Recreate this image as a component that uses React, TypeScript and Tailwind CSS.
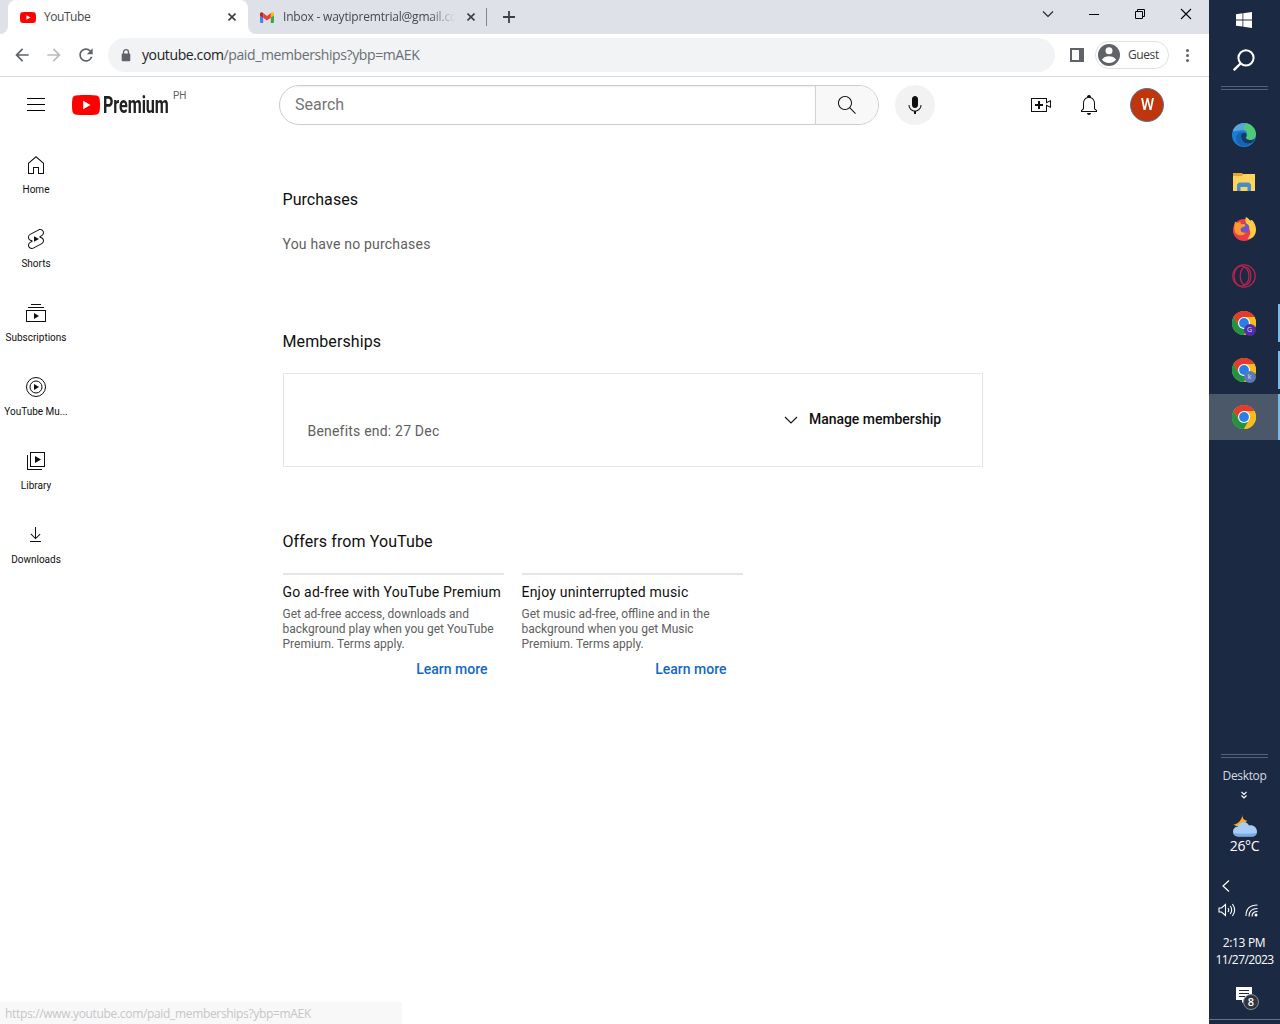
import React from "react";

const segoe = "font-['Open_Sans','Noto_Sans',sans-serif]";

function Icon({ d, className = "size-6" }: { d: string; className?: string }) {
  return (
    <svg viewBox="0 0 24 24" className={className} fill="currentColor">
      <path d={d} />
    </svg>
  );
}

const icons = {
  home: "m12 4.44 7 6.09V20h-4v-6H9v6H5v-9.47l7-6.09m0-1.32-8 6.96V21h6v-6h4v6h6V10.08l-8-6.96z",
  shorts:
    "M10 14.65v-5.3L15 12l-5 2.65zm7.77-4.33-1.2-.5L18 9.06c1.84-.96 2.53-3.23 1.56-5.06s-3.24-2.53-5.07-1.56L6 6.94c-1.29.68-2.07 2.04-2 3.49.07 1.42.93 2.67 2.22 3.25.03.01 1.2.5 1.2.5L6 14.93c-1.83.97-2.53 3.24-1.56 5.07.97 1.83 3.24 2.53 5.07 1.56l8.5-4.5c1.29-.68 2.06-2.04 1.99-3.49-.07-1.42-.94-2.68-2.23-3.25zm-.23 5.86-8.5 4.5c-1.34.71-3.01.2-3.72-1.14-.71-1.34-.2-3.01 1.14-3.72l2.04-1.08v-1.21l-.69-.28-1.11-.46c-.99-.41-1.65-1.35-1.7-2.41-.05-1.06.52-2.06 1.46-2.56l8.5-4.5c1.34-.71 3.01-.2 3.72 1.14.71 1.34.2 3.01-1.14 3.72L15.5 9.26v1.21l1.8.74c.99.41 1.65 1.35 1.7 2.41.05 1.06-.52 2.06-1.46 2.56z",
  subs: "M10 18v-6l5 3-5 3zm7-15H7v1h10V3zm3 3H4v1h16V6zm2 3H2v12h20V9zM3 10h18v10H3V10z",
  library: "m11 7 6 3.5L11 14V7zm7 13H4V6H3v15h15v-1zm3-2H6V3h15v15zM7 17h13V4H7v13z",
  download: "M17 18v1H6v-1h11zm-.5-6.6-.7-.7-3.8 3.7V4h-1v10.4l-3.8-3.8-.7.7 5 5 5-4.9z",
  search:
    "m20.87 20.17-5.59-5.59C16.35 13.35 17 11.75 17 10c0-3.87-3.13-7-7-7s-7 3.13-7 7 3.13 7 7 7c1.75 0 3.35-.65 4.58-1.71l5.59 5.59.7-.71zM10 16c-3.31 0-6-2.69-6-6s2.69-6 6-6 6 2.69 6 6-2.69 6-6 6z",
  mic: "M12 3c-1.66 0-3 1.37-3 3.07v5.86c0 1.7 1.34 3.07 3 3.07s3-1.37 3-3.07V6.07C15 4.37 13.66 3 12 3zm6.5 9h-1c0 3.03-2.47 5.5-5.5 5.5S6.5 15.03 6.5 12h-1c0 3.24 2.39 5.93 5.5 6.41V21h2v-2.59c3.11-.48 5.5-3.17 5.5-6.41z",
  create:
    "M14 13h-3v3H9v-3H6v-2h3V8h2v3h3v2zm3-7H3v12h14v-6.39l4 1.83V8.56l-4 1.83V6m1-1v3.83L22 7v8l-4-1.83V19H2V5h16z",
  bell: "M10 20h4c0 1.1-.9 2-2 2s-2-.9-2-2zm10-2.65V19H4v-1.65l2-1.88v-5.15C6 7.4 7.56 5.1 10 4.34v-.38c0-1.42 1.49-2.5 2.99-1.76.65.32 1.01 1.03 1.01 1.76v.39c2.44.75 4 3.06 4 5.98v5.15l2 1.87zm-1 .42-2-1.88v-5.47c0-2.47-1.19-4.36-3.13-5.1-1.26-.53-2.64-.5-3.84.03C8.15 6.11 7 7.99 7 10.42v5.47l-2 1.88V18h14v-.23z",
  back: "M20 11H7.83l5.59-5.59L12 4l-8 8 8 8 1.41-1.41L7.83 13H20v-2z",
  forward: "m12 4-1.41 1.41L16.17 11H4v2h12.17l-5.58 5.59L12 20l8-8z",
  reload:
    "M17.65 6.35A7.958 7.958 0 0 0 12 4c-4.42 0-7.99 3.58-7.99 8s3.57 8 7.99 8c3.73 0 6.84-2.55 7.73-6h-2.08A5.99 5.99 0 0 1 12 18c-3.31 0-6-2.69-6-6s2.69-6 6-6c1.66 0 3.14.69 4.22 1.78L13 11h7V4l-2.35 2.35z",
};

function PlayBadge({ className }: { className: string }) {
  return (
    <svg viewBox="0 0 28 20" className={className} preserveAspectRatio="none">
      <path
        fill="#f00"
        d="M27.4 3.1A3.6 3.6 0 0 0 24.9.6C22.7 0 14 0 14 0S5.3 0 3.1.6A3.6 3.6 0 0 0 .6 3.1C0 5.3 0 10 0 10s0 4.7.6 6.9a3.6 3.6 0 0 0 2.500 2.500C5.3 20 14 20 14 20s8.7 0 10.9-.6a3.6 3.6 0 0 0 2.500-2.500C28 14.7 28 10 28 10s0-4.7-.6-6.9z"
      />
      <path fill="#fff" d="m11.2 14.3 7.3-4.3-7.3-4.3z" />
    </svg>
  );
}

function Close() {
  return (
    <svg viewBox="0 0 8 8" className="size-2 shrink-0" stroke="#3c4043" strokeWidth="1.6">
      <path d="M.5.5l7 7M7.5.5l-7 7" />
    </svg>
  );
}

function TabStrip() {
  return (
    <div className={`flex h-[34px] bg-[#dee1e8] pl-2 text-[12px] text-[#45494d] ${segoe}`}>
      <div className="relative flex w-60 items-center rounded-t-lg bg-white pl-3">
        <svg viewBox="0 0 8 8" className="absolute -left-2 bottom-0 size-2">
          <path fill="#fff" d="M8 0v8H0a8 8 0 0 0 8-8z" />
        </svg>
        <svg viewBox="0 0 8 8" className="absolute -right-2 bottom-0 size-2">
          <path fill="#fff" d="M0 0v8h8a8 8 0 0 1-8-8z" />
        </svg>
        <PlayBadge className="h-[11px] w-4" />
        <span className="ml-2 flex-1 tracking-[-0.45px]">YouTube</span>
        <span className="mr-3">
          <Close />
        </span>
      </div>
      <div className="flex w-[238px] items-center pl-3">
        <svg viewBox="0 0 14 11" className="h-[11px] w-[14px] shrink-0">
          <path fill="#4285f4" d="M0 2v8a1 1 0 0 0 1 1h2.200V4z" />
          <path fill="#34a853" d="M14 2v8a1 1 0 0 1-1 1h-2.200V4z" />
          <path fill="#fbbc04" d="M10.800 1v4.800L14 3.500V1.800C14 .3 12.200-.5 10.800 1z" />
          <path fill="#c5221f" d="M3.200 1v4.800L0 3.500V1.800C0 .3 1.800-.5 3.200 1z" />
          <path fill="#ea4335" d="M3.200 5.800V1L7 3.900 10.800 1v4.800L7 8.600z" />
        </svg>
        <span className="ml-[9px] w-[172px] shrink-0 whitespace-nowrap tracking-[-0.2px] [mask-image:linear-gradient(to_right,black_85%,transparent)]">
          Inbox - waytipremtrial@gmail.cc
        </span>
        <span className="ml-3">
          <Close />
        </span>
      </div>
      <div className="mt-2 h-[18px] w-px bg-[#80868b]" />
      <svg viewBox="0 0 12 12" className="ml-4 mt-[11px] size-3" stroke="#3c4043" strokeWidth="1.8">
        <path d="M6 0v12M0 6h12" />
      </svg>
      <div className="ml-auto mr-[17px] flex h-7 items-center text-black">
        <svg viewBox="0 0 12 12" className="mr-[34px] size-3" fill="none" stroke="#222" strokeWidth="1.1">
          <path d="m1 3.500 5 5 5-5" />
        </svg>
        <svg viewBox="0 0 12 12" className="mr-[34px] size-3" fill="none" stroke="#000">
          <path d="M1 6.500h10" />
        </svg>
        <svg viewBox="0 0 12 12" className="mr-[34px] size-3" fill="none" stroke="#000">
          <path d="M1.500 3.500h7v7h-7zM3.500 3.500v-2h7v7h-2" />
        </svg>
        <svg viewBox="0 0 12 12" className="size-3" fill="none" stroke="#000" strokeWidth="1.1">
          <path d="m1 1 10 10M11 1 1 11" />
        </svg>
      </div>
    </div>
  );
}

function Toolbar() {
  return (
    <div className={`flex h-[43px] items-center border-b border-[#dadce0] bg-white pl-3 ${segoe}`}>
      <Icon d={icons.back} className="size-5 text-[#5f6368]" />
      <Icon d={icons.forward} className="ml-3 size-5 text-[#babcbe]" />
      <Icon d={icons.reload} className="ml-3 size-5 text-[#5f6368]" />
      <div className="ml-3 flex h-[34px] w-[947px] items-center rounded-full bg-[#f1f3f4] pl-[13px]">
        <svg viewBox="0 0 10 13" className="h-[13px] w-[10px]">
          <path d="M2.500 5V3.200a2.500 2.500 0 0 1 5 0V5" fill="none" stroke="#5f6368" strokeWidth="1.300" />
          <rect x=".7" y="4.500" width="8.600" height="7.800" rx="1" fill="#5f6368" />
        </svg>
        <span className="ml-[11px] mt-[-1px] text-[14px] tracking-[-0.39px] text-[#6a6e73]">
          <span className="text-[#202124]">youtube.com</span>/paid_memberships?ybp=mAEK
        </span>
      </div>
      <div className="ml-[15px] h-[14px] w-[14px] border-2 border-r-[5px] border-[#5f6368]" />
      <div className="ml-[11px] flex h-7 w-[74px] items-center rounded-full border border-[#dfe1e5] pl-[2px]">
        <svg viewBox="0 0 22 22" className="size-[22px]">
          <circle cx="11" cy="11" r="11" fill="#5f6368" />
          <circle cx="11" cy="6.800" r="3.500" fill="#fff" />
          <path d="M4 15.500c2.500-4.500 11.500-4.500 14 0-2.500 4.500-11.500 4.500-14 0z" fill="#fff" />
        </svg>
        <span className="ml-2 text-[12px] tracking-[-0.4px] text-[#3c4043]">Guest</span>
      </div>
      <div className="ml-[17px] flex flex-col gap-[2px]">
        <i className="size-[3px] rounded-full bg-[#5f6368]" />
        <i className="size-[3px] rounded-full bg-[#5f6368]" />
        <i className="size-[3px] rounded-full bg-[#5f6368]" />
      </div>
    </div>
  );
}

function Masthead() {
  return (
    <header className="flex h-14 items-center pl-6 text-[#0f0f0f]">
      <div className="ml-[3px] mt-[-1px] flex w-[18px] flex-col gap-[5px]">
        <i className="h-px bg-[#030303]" />
        <i className="h-px bg-[#030303]" />
        <i className="h-px bg-[#030303]" />
      </div>
      <div className="ml-[27px] flex w-[207px] items-center">
        <PlayBadge className="h-5 w-7" />
        <span className="ml-[3px] mt-px w-[67px] origin-left scale-x-[.735] scale-y-105 text-[22px] font-bold leading-5 tracking-[-0.1px] text-[#212121]">
          Premium
        </span>
        <span className="mb-[18px] ml-[3px] text-[10px] leading-3 text-[#606060]">PH</span>
      </div>
      <div className="flex h-10 w-[600px] overflow-hidden rounded-full border border-[#ccc]">
        <div className="flex flex-1 items-center pl-[15px] text-[16px] text-[#757575] shadow-[inset_0_1px_2px_#eee]">
          Search
        </div>
        <div className="flex w-[63px] items-center justify-center border-l border-[#d3d3d3] bg-[#f8f8f8]">
          <Icon d={icons.search} />
        </div>
      </div>
      <div className="ml-4 flex size-10 items-center justify-center rounded-full bg-[#f2f2f2]">
        <Icon d={icons.mic} />
      </div>
      <Icon d={icons.create} className="ml-[94px] size-6" />
      <Icon d={icons.bell} className="ml-6 size-6" />
      <div className="ml-[29px] flex size-[34px] items-center justify-center rounded-full border border-[#58739a] bg-[#bf360c] text-[17px] font-medium text-white">
        <span className="scale-x-90">W</span>
      </div>
    </header>
  );
}

function NavItem({ label, children }: { label: string; children: React.ReactNode }) {
  return (
    <div className="flex h-[74px] flex-col items-center pt-4 text-[#0f0f0f]">
      {children}
      <span className="mt-[6px] text-[10px] leading-[14px]">{label}</span>
    </div>
  );
}

function Sidebar() {
  return (
    <nav className="w-[72px] shrink-0 pt-1">
      <NavItem label="Home"><Icon d={icons.home} /></NavItem>
      <NavItem label="Shorts"><Icon d={icons.shorts} /></NavItem>
      <NavItem label="Subscriptions"><Icon d={icons.subs} /></NavItem>
      <NavItem label="YouTube Mu...">
        <svg viewBox="0 0 24 24" className="size-6" fill="none" stroke="currentColor">
          <circle cx="12" cy="12" r="9.500" />
          <circle cx="12" cy="12" r="6" />
          <path d="M10 9v6l5-3z" fill="currentColor" stroke="none" />
        </svg>
      </NavItem>
      <NavItem label="Library"><Icon d={icons.library} /></NavItem>
      <NavItem label="Downloads"><Icon d={icons.download} /></NavItem>
    </nav>
  );
}

function Offer({ title, lines }: { title: string; lines: string[] }) {
  return (
    <div className="w-[221px] border-t-2 border-[#e5e5e5] pt-[7px]">
      <h3 className="ml-[-0.5px] whitespace-nowrap text-[14px] leading-5 tracking-[0.2px] text-[#0f0f0f]">{title}</h3>
      <div className="ml-[-0.5px] mt-[5px] whitespace-nowrap text-[12px] leading-[15px] text-[#606060]">
        {lines.map((l) => (
          <p key={l}>{l}</p>
        ))}
      </div>
      <div className="mr-[16.5px] mt-[7px] text-right text-[14px] font-medium leading-5 text-[#1367c4]">Learn more</div>
    </div>
  );
}

function Content() {
  return (
    <main className="ml-[211px] w-[700px] text-[#0f0f0f]">
      <h2 className="ml-[-0.5px] mt-[55px] text-[16px] leading-6 tracking-[0.05px]">Purchases</h2>
      <p className="ml-[-0.5px] mt-[22px] text-[14px] leading-5 tracking-[0.2px] text-[#606060]">You have no purchases</p>
      <h2 className="ml-[-0.5px] mt-[76px] text-[16px] leading-6 tracking-[0.1px]">Memberships</h2>
      <div className="mt-[19px] flex h-[94px] justify-between border border-[#e5e5e5] pl-[23.5px] pr-[41px]">
        <p className="mt-[47px] text-[14px] leading-5 tracking-[0.2px] text-[#606060]">Benefits end: 27 Dec</p>
        <div className="mt-[35px] flex h-5 items-center text-[14px] font-medium tracking-[-0.04px]">
          <svg viewBox="0 0 14 8" className="mr-[11px] mt-[2px] h-2 w-[14px]" fill="none" stroke="currentColor" strokeWidth="1.1">
            <path d="m1 1 6 6 6-6" />
          </svg>
          Manage membership
        </div>
      </div>
      <h2 className="ml-[-0.5px] mt-[63px] text-[16px] leading-6 tracking-[0.1px]">Offers from YouTube</h2>
      <div className="mt-[19px] flex gap-[18px]">
        <Offer
          title="Go ad-free with YouTube Premium"
          lines={["Get ad-free access, downloads and", "background play when you get YouTube", "Premium. Terms apply."]}
        />
        <Offer
          title="Enjoy uninterrupted music"
          lines={["Get music ad-free, offline and in the", "background when you get Music", "Premium. Terms apply."]}
        />
      </div>
    </main>
  );
}

function Chrome({ badge, badgeClass = "" }: { badge?: string; badgeClass?: string }) {
  return (
    <div className="relative size-6">
      <svg viewBox="0 0 24 24" className="size-6">
        <circle cx="12" cy="12" r="12" fill="#fbbc1e" />
        <path d="M1.600 6A12 12 0 0 1 22.400 6H12L6.800 15z" fill="#e33b2e" />
        <path d="M1.600 6A12 12 0 0 0 12 24l5.200-9L12 17.500 6.800 15z" fill="#229342" />
        <path d="M12 24l5.200-9 .5-9h4.700A12 12 0 0 1 12 24z" fill="#fbbc1e" />
        <circle cx="12" cy="12" r="6" fill="#fff" />
        <circle cx="12" cy="12" r="4.900" fill="#2b7de9" />
      </svg>
      {badge && (
        <span
          className={`absolute -bottom-px left-3 flex size-3 items-center justify-center rounded-full text-[7px] leading-none text-[#dcdcf5] ${badgeClass}`}
        >
          {badge}
        </span>
      )}
    </div>
  );
}

function TaskItem({ open, active, children }: { open?: boolean; active?: boolean; children: React.ReactNode }) {
  return (
    <div className={`flex w-full items-center ${active ? "mt-px h-[46px] bg-[#4b586a]" : "h-[47px]"}`}>
      <div className="flex w-[69px] justify-center">{children}</div>
      {open && <i className={`w-[2px] bg-[#76b9ed] ${active ? "h-[46px]" : "h-[38px]"}`} />}
    </div>
  );
}

function Taskbar() {
  return (
    <aside className={`flex h-full w-[71px] shrink-0 flex-col items-center bg-[#1c2942] text-[12px] text-white ${segoe}`}>
      <svg viewBox="0 0 16 16" className="mr-px mt-3 size-4 shrink-0" fill="#fff">
        <path d="M0 2.200 6.500 1.300v6.200H0zM7.300 1.200 16 0v7.500H7.300zM0 8.400h6.500v6.200L0 13.700zM7.300 8.400H16V16l-8.700-1.200z" />
      </svg>
      <svg viewBox="0 0 22 22" className="mr-[2px] mt-[21px] size-[22px] shrink-0" fill="none" stroke="#fff" strokeWidth="2">
        <circle cx="13" cy="8.800" r="7.600" />
        <path d="M7.500 14.500.8 21.200" strokeWidth="2.400" />
      </svg>
      <div className="mt-[15px] h-1 w-[47px] shrink-0 border-y border-[#56627a]" />
      <div className="mt-[21px] w-full">
        <TaskItem>
          <svg viewBox="0 0 24 24" className="size-6">
            <circle cx="12" cy="12" r="12" fill="#1a7fd4" />
            <path d="M.7 8C3 2 8 0 12 0c5 0 8 3 9 5l-6 4c-2-2-5-2-8-1.500S2 9 .7 8z" fill="#5aa5dc" />
            <path d="M14 .2C20 1 24 6 24 11.500c0 3.500-3 5.500-6 5.500-2.500 0-4-1-4-2.200 2-2 1.500-5.500-1-8C11 5 12 2 14 .2z" fill="#4fcb78" />
            <path d="M9 13c0-3 3-4 4.500-3 1.500 1.500 1 3 .3 4.500 0 1.500 2 2.500 4.200 2.500 2 0 3.500-.5 4.500-1-1 3-2.500 4-4.500 4.500C12 21.500 9 17 9 13z" fill="#153a66" />
            <path d="M9 13c0 5 3 8.500 9.500 7.500C13 25.500 5 23 4 16c0-4 3-7.500 7-6.500-1.500 1-2 2-2 3.500z" fill="#1664b8" />
          </svg>
        </TaskItem>
        <TaskItem>
          <svg viewBox="0 0 22 18" className="h-[18px] w-[22px]">
            <path d="M0 0h9l1 1h12v17H0z" fill="#e8a524" />
            <path d="M0 3h9l1-2h12v17H0z" fill="#ffd45c" />
            <path d="M4 18v-6.500L6 9.500h10l2 2V18h-3.500v-4h-7v4z" fill="#4a8cc8" />
          </svg>
        </TaskItem>
        <TaskItem>
          <svg viewBox="0 0 24 24" className="size-6">
            <circle cx="12" cy="13" r="11" fill="#ef3b46" />
            <path d="M14 0c2 1 3 2.500 4.500 3.500L20 3c2.500 2.500 4 6 4 9.500 0 6-4 10-8.500 9.500 2.500-3 4-7 1-11.500C14 7 12.500 3 14 0z" fill="#ffcb45" />
            <circle cx="12.500" cy="11" r="4.800" fill="#7353c6" />
            <path d="M3 4.500l2.500 1.500L8 4.500 9 7h3.500l1 2-4.500 2c-1.500 3 1 5.500 5 4.500-2.500 4-9 3.500-11 0-1-3-1-7 0-11z" fill="#fb9b2f" />
            <path d="M1 12c1 6 9 9 15 6-3 6-15 6-15-6z" fill="#ef3b46" />
          </svg>
        </TaskItem>
        <TaskItem>
          <svg viewBox="0 0 24 24" className="size-6" fill="none" stroke="#ba2450" strokeWidth="1.200">
            <circle cx="12" cy="12" r="11.200" />
            <ellipse cx="9.500" cy="12" rx="7.500" ry="10" />
            <ellipse cx="13.500" cy="12" rx="5.300" ry="9" />
          </svg>
        </TaskItem>
        <TaskItem open><Chrome badge="G" badgeClass="bg-[#512da8]" /></TaskItem>
        <TaskItem open><Chrome badge="k" badgeClass="bg-[#5c78b5]" /></TaskItem>
        <TaskItem open active><Chrome /></TaskItem>
      </div>
      <div className="mt-auto h-1 w-[47px] shrink-0 border-y border-[#56627a]" />
      <span className="mt-[10px] leading-4 tracking-[-0.35px] text-[#d5d9e0]">Desktop</span>
      <svg viewBox="0 0 6 8" className="mr-px mt-[7px] h-2 w-[6px] shrink-0" fill="none" stroke="#fff" strokeWidth="1.200">
        <path d="m.5.8 2.500 2.500L5.500.8M.5 4.500 3 7l2.500-2.500" />
      </svg>
      <svg viewBox="0 0 24 23" className="mt-[15px] h-[23px] w-6 shrink-0">
        <path d="M9.500 0c-.5 4 1.500 6.500 4.500 6.500-1 4-9 8-13.500 4C5.500 10 9 6 9.500 0z" fill="#f6ab2f" />
        <path d="M5 22.500a5 5 0 0 1 0-10c1-5 9-6 11-1 4-1 8 2 8 6 0 3-2 5-5 5z" fill="#a8ccf4" />
        <path d="M5 22.500c-3 0-4.500-2-5-3.500 5 1 18 1 23.500 0-.5 2-2 3.500-4.500 3.500z" fill="#77ace8" />
      </svg>
      <span className="text-[14px] leading-[18px] tracking-[-0.3px]">26°C</span>
      <svg viewBox="0 0 8 12" className="ml-[-37px] mt-[25px] h-3 w-2 shrink-0" fill="none" stroke="#fff" strokeWidth="1.200">
        <path d="M7 .5 1 6l6 5.500" />
      </svg>
      <div className="ml-[-13px] mt-[11px] flex gap-[9px]">
        <svg viewBox="0 0 18 14" className="h-[14px] w-[18px]" fill="none" stroke="#fff" strokeWidth="1.1">
          <path d="M1 5h2.500l4-3.500v11L3.500 9H1zM10 5q1.500 2 0 4M12.200 3q3 4 0 8M14.400 1q4.500 6 0 12" />
        </svg>
        <svg viewBox="0 0 14 14" className="h-[14px] w-[14px]" fill="none" stroke="#fff" strokeWidth="1.1">
          <path d="M1 13Q1 2 12.500 2M4 13.500Q4 5.500 12.500 5.500M7 13.500Q7 8.500 12.500 8.500" />
          <circle cx="11" cy="12" r="1.500" fill="#fff" stroke="none" />
        </svg>
      </div>
      <span className="mr-px mt-[17px] leading-[17px] tracking-[-0.35px]">2:13 PM</span>
      <span className="leading-[17px] tracking-[-0.55px]">11/27/2023</span>
      <div className="relative mr-px mt-[19px] h-[24px] w-4 shrink-0">
        <svg viewBox="0 0 16 16" className="size-4">
          <path d="M0 0h16v13H9l-3 3v-3H0z" fill="#fff" />
          <path d="M3 3.500h10M3 6.500h10M3 9.500h6" stroke="#1c2942" />
        </svg>
        <span className="absolute left-[7px] top-[7px] flex size-4 items-center justify-center rounded-full border border-[#8a8f99] bg-[#30343c] text-[11px] font-semibold">
          8
        </span>
      </div>
      <div className="mb-[4px] mt-[8px] h-px w-full shrink-0 bg-[#66728a]" />
    </aside>
  );
}

export default function App() {
  return (
    <div className="flex h-[1024px] w-[1280px] overflow-hidden bg-white font-['Roboto',sans-serif]">
      <div className="relative w-[1209px] shrink-0">
        <TabStrip />
        <Toolbar />
        <Masthead />
        <div className="flex">
          <Sidebar />
          <Content />
        </div>
        <div
          className={`absolute bottom-0 left-0 flex h-[22px] w-[402px] items-center bg-[#f8f8f8] pl-[5px] text-[12px] tracking-[-0.33px] text-[#c4c6c8] ${segoe}`}
        >
          <span className="mt-[2px]">https://www.youtube.com/paid_memberships?ybp=mAEK</span>
        </div>
      </div>
      <Taskbar />
    </div>
  );
}
